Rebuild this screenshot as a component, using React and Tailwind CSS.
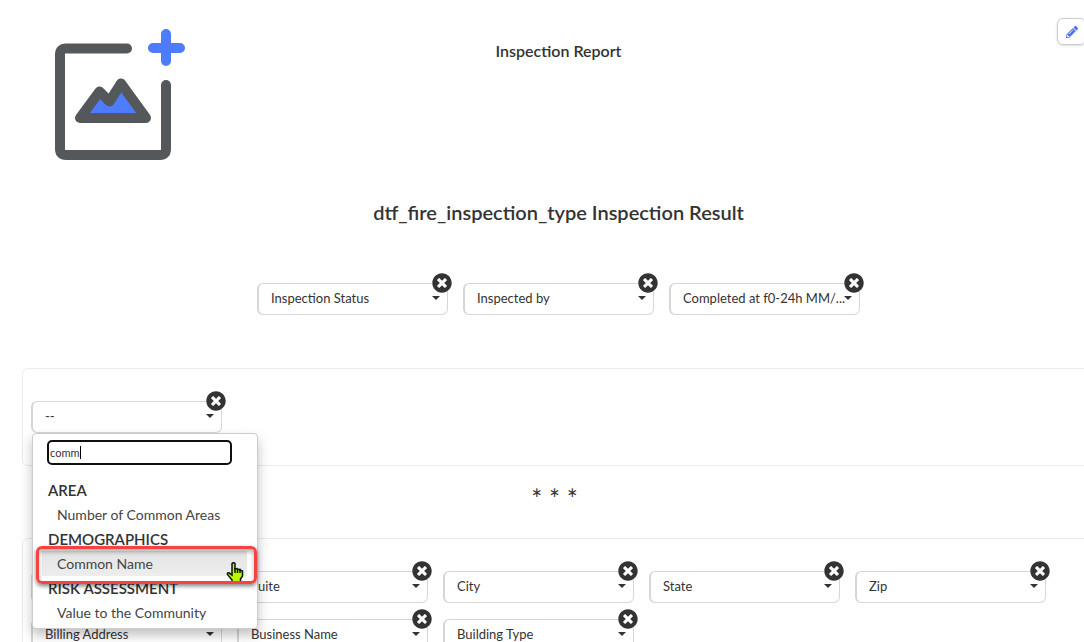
import React, { useState } from "react";
import { FaPencilAlt, FaTimesCircle } from "react-icons/fa";

const resultFields = ["Inspection Status", "Inspected by", "Completed at f0-24h MM/..."];

const detailFields = [
  "Address",
  "Suite",
  "City",
  "State",
  "Zip",
  "Billing Address",
  "Business Name",
  "Building Type",
];

const groups = [
  { label: "AREA", option: "Number of Common Areas" },
  { label: "DEMOGRAPHICS", option: "Common Name" },
  { label: "RISK ASSESSMENT", option: "Value to the Community" },
];

const LogoPlaceholder = () => (
  <svg className="h-[131px] w-[131px]" viewBox="54 29 131 131" fill="none" aria-hidden="true">
    <g strokeWidth="10" strokeLinecap="round" strokeLinejoin="round">
      <path
        d="M127 48.500H66q-6 0-6 6V149q0 6 6 6h94q6 0 6-6V85"
        stroke="#54585b"
      />
      <path d="M80 118l19.500-26.500 10 10L121 83.500 146 118z" fill="#4d7cff" stroke="#54585b" />
      <path d="M166 34v27M153 48h27" stroke="#4d7cff" />
    </g>
  </svg>
);

const HandCursor = () => (
  <svg
    className="pointer-events-none absolute top-4 right-[13px] h-5 w-[18px]"
    viewBox="0 0 18 20"
    aria-hidden="true"
  >
    <path
      d="M6 1.500q1.500-1.500 3 0V7l2-.5 1 1 2-.2 1 1.200 1.500.5V14l-2 3v3H6v-2l-4.500-5.500q-.5-2 1.500-1.700L6 13z"
      fill="#b5f800"
      stroke="#111"
      strokeWidth="1.500"
    />
    <path d="M9 6v5M11.500 7v4M14 8v3" stroke="#111" strokeWidth="1.500" />
  </svg>
);

const FieldSelect = ({ label, children }) => (
  <div className="relative w-[191px]">
    <select
      aria-label={label}
      className="block h-8 w-full appearance-none rounded-md border border-l-2 border-[#d6d6d6] bg-white pr-3 pl-3 text-[13px] text-[#333]"
    >
      <option>{label}</option>
    </select>
    <span className="pointer-events-none absolute top-[13px] right-2 border-x-4 border-t-4 border-x-transparent border-t-[#333]" />
    <button
      type="button"
      aria-label={`Remove ${label}`}
      className="absolute -top-[10px] -right-1 rounded-full bg-white text-xl leading-5 text-[#333]"
    >
      <FaTimesCircle />
    </button>
    {children}
  </div>
);

const SearchMenu = () => {
  const [query, setQuery] = useState("comm");

  return (
    <div className="absolute top-8 left-px z-10 w-[226px] rounded-sm border border-[#ccc] bg-white pt-[6px] pb-[3px] shadow-[0_6px_12px_rgba(0,0,0,0.25)]">
      <div className="relative ml-[14px] w-[185px]">
        <input
          type="text"
          aria-label="Search fields"
          value={query}
          onChange={(e) => setQuery(e.target.value)}
          className="block h-[25px] w-full rounded-[5px] border-2 border-[#101010] px-px text-[11px] text-[#333] caret-transparent outline-none"
        />
        <span className="pointer-events-none absolute top-[6px] left-[33px] h-[13px] w-px bg-black" />
      </div>
      <div role="listbox" aria-label="Fields" className="mt-[13px] text-sm text-[#444]">
        {groups.map(({ label, option }) => (
          <div key={label} role="group" aria-label={label} className="relative">
            <div className="pl-[15px] text-[15px] leading-6 font-semibold text-[#333]">{label}</div>
            <div
              role="option"
              aria-selected={option === "Common Name"}
              className="mr-[10px] ml-[9px] bg-linear-to-b pl-[15px] leading-[25px] aria-selected:from-[#e4e4e4] aria-selected:to-[#ededed]"
            >
              {option}
            </div>
            {option === "Common Name" && (
              <div className="pointer-events-none absolute top-[19px] right-0 left-[3px] z-10 h-[38px]">
                <HandCursor />
                <div className="absolute inset-0 rounded-md border-3 border-[#f54343] shadow-[0_2px_4px_rgba(0,0,0,0.5),inset_0_3px_4px_rgba(0,0,0,0.3)]" />
              </div>
            )}
          </div>
        ))}
      </div>
    </div>
  );
};

const App = () => {
  return (
    <div className="h-screen overflow-hidden bg-white font-['Lato',sans-serif] text-[#333]">
      {/* The report sheet runs a little past the right edge of the window */}
      <main className="-mr-[11px] ml-[22px]">
        <header className="grid grid-cols-[1fr_auto_1fr] items-start pt-[18px]">
          <div className="pt-[11px] pl-8">
            <LogoPlaceholder />
          </div>
          <h1 className="pt-[21px] text-base leading-6 font-semibold">Inspection Report</h1>
          <button
            type="button"
            aria-label="Edit"
            className="mr-[9px] flex h-[27px] w-[29px] items-center justify-center justify-self-end rounded-md border border-[#ccc] text-xs text-[#4d74f5] shadow-sm"
          >
            <FaPencilAlt />
          </button>
        </header>

        <h2 className="mt-[38px] text-center text-xl leading-7 font-semibold">
          dtf_fire_inspection_type Inspection Result
        </h2>

        <div className="mt-[57px] flex justify-center gap-[15px]">
          {resultFields.map((label) => (
            <FieldSelect key={label} label={label} />
          ))}
        </div>

        {/* Section with the open field picker */}
        <section className="mt-[53px] rounded-md border border-[#ececec] px-2 py-8">
          <FieldSelect label="--">
            <SearchMenu />
          </FieldSelect>
        </section>

        <div className="flex h-[72px] items-center justify-center pr-2 pb-[6px] text-[26px] leading-6">
          * * *
        </div>

        {/* Address section */}
        <section className="flex flex-wrap gap-x-[15px] gap-y-4 rounded-md border border-[#ececec] px-2 py-8">
          {detailFields.map((label) => (
            <FieldSelect key={label} label={label} />
          ))}
        </section>
      </main>
    </div>
  );
};

export default App;
